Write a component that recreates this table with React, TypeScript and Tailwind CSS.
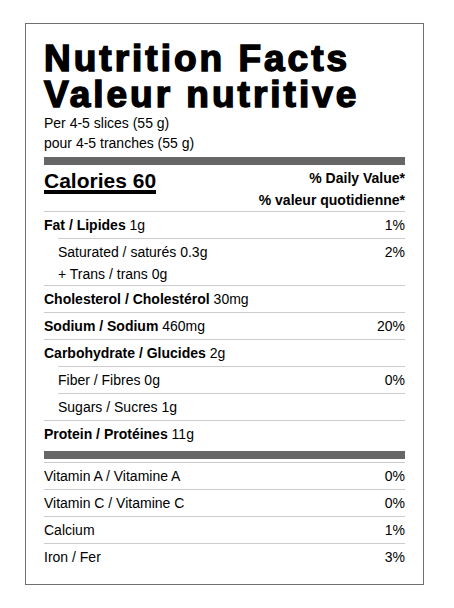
import React from "react";

type RowProps = {
  label?: string;
  bold?: string;
  value?: string;
  pct?: string;
  indent?: boolean;
};

function Row({ label, bold, value, pct, indent }: RowProps) {
  return (
    <div
      className={
        "flex h-[27px] items-center justify-between border-t border-[#cccccc] text-[14px] leading-[26px] " +
        (indent ? "ml-[14px]" : "")
      }
    >
      <div>
        {bold ? <span className="font-bold">{bold}</span> : null}
        {bold && value ? " " : null}
        {label}
        {value}
      </div>
      {pct ? <div>{pct}</div> : null}
    </div>
  );
}

export default function App() {
  return (
    <div className="min-h-[608px] w-[454px] bg-white pl-[25px] pt-[23px] font-['Liberation_Sans',Arial,sans-serif] text-black">
      <div className="h-[562px] w-[399px] border border-[#707070] px-[18px] pt-[17px]">
        <div className="text-[37px] font-bold leading-[36px] tracking-[3px] [-webkit-text-stroke:1.5px_#000]">
          <div>Nutrition Facts</div>
          <div>Valeur nutritive</div>
        </div>
        <div className="text-[14px] leading-[20px]">
          <div>Per 4-5 slices (55 g)</div>
          <div>pour 4-5 tranches (55 g)</div>
        </div>
        <div className="mt-[4px] h-[8px] bg-[#666666]" />
        <div className="mt-[2px] flex h-[44px] justify-between">
          <div>
            <span className="mt-[4px] inline-block border-b-4 border-black text-[21px] font-bold leading-[19px]">
              Calories 60
            </span>
          </div>
          <div className="text-right text-[14px] font-bold leading-[22px]">
            <div>% Daily Value*</div>
            <div>% valeur quotidienne*</div>
          </div>
        </div>
        <Row bold="Fat / Lipides" value="1g" pct="1%" />
        <div className="ml-[14px] h-[47px] border-t border-[#cccccc] pt-[2px] text-[14px] leading-[22px]">
          <div className="flex justify-between">
            <div>Saturated / saturés 0.3g</div>
            <div>2%</div>
          </div>
          <div>+ Trans / trans 0g</div>
        </div>
        <Row bold="Cholesterol / Cholestérol" value="30mg" />
        <Row bold="Sodium / Sodium" value="460mg" pct="20%" />
        <Row bold="Carbohydrate / Glucides" value="2g" />
        <Row indent label="Fiber / Fibres 0g" pct="0%" />
        <Row indent label="Sugars / Sucres 1g" />
        <Row bold="Protein / Protéines" value="11g" />
        <div className="mb-[3px] mt-[4px] h-[8px] bg-[#666666]" />
        <Row label="Vitamin A / Vitamine A" pct="0%" />
        <Row label="Vitamin C / Vitamine C" pct="0%" />
        <Row label="Calcium" pct="1%" />
        <Row label="Iron / Fer" pct="3%" />
      </div>
    </div>
  );
}
